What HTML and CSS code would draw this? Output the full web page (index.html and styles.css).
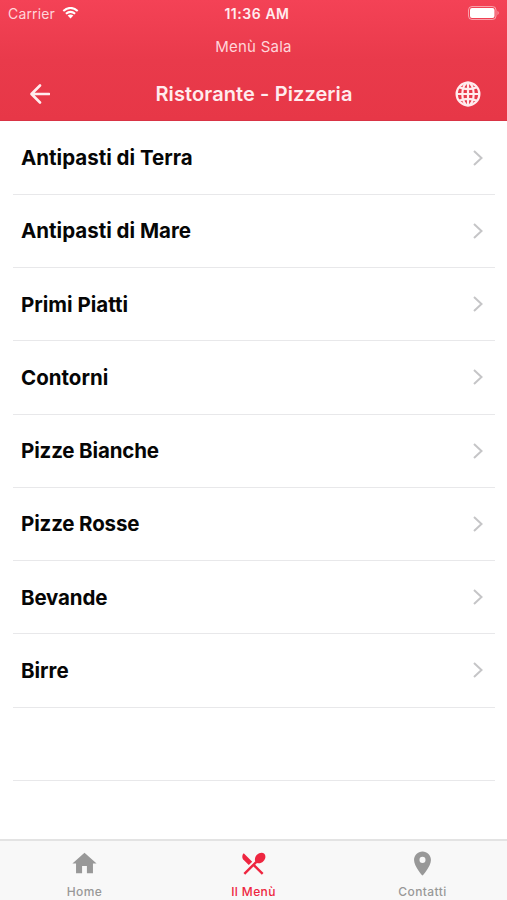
FILE: index.html
```html
<!DOCTYPE html>
<html lang="it">
<head>
<meta charset="utf-8">
<title>Menù Sala</title>
<link rel="stylesheet" href="styles.css">
</head>
<body>
<div class="app">
  <header class="header">
    <div class="status">
      <div class="carrier"><span>Carrier</span>
        <svg class="wifi" viewBox="0 0 18 13"><path d="M1.2 4.3Q9-2.3 16.8 4.3M4 7.4Q9 3.2 14 7.4" fill="none" stroke="currentColor" stroke-width="2.2"/><path d="M5.9 9.3Q9 7 12.1 9.3L9 12.4Z" fill="currentColor"/></svg>
      </div>
      <span class="time">11:36 AM</span>
      <svg class="battery" viewBox="0 0 32 14"><rect x=".5" y=".5" width="27.5" height="13" rx="3.5" fill="none" stroke="currentColor" opacity=".5"/><rect x="2" y="2" width="24.5" height="10" rx="2" fill="currentColor"/><path d="M29.5 4.8Q32 7 29.5 9.2Z" fill="currentColor" opacity=".5"/></svg>
    </div>
    <div class="subtitle">Menù Sala</div>
    <div class="navbar">
      <svg class="back" viewBox="0 0 20 20"><path d="M19 10H1.8M10 1.5L1.5 10L10 18.5" fill="none" stroke="currentColor" stroke-width="2.6" stroke-linecap="round" stroke-linejoin="round"/></svg>
      <h1 class="title">Ristorante - Pizzeria</h1>
      <svg class="globe" viewBox="0 0 26 26"><g fill="none" stroke="currentColor" stroke-width="2.2"><circle cx="13" cy="13" r="11.4"/><ellipse cx="13" cy="13" rx="5.7" ry="11.4"/><path d="M13 1.5V24.5M1.5 13H24.5M4 6.2Q13 10 22 6.2M4 19.8Q13 16 22 19.8"/></g></svg>
    </div>
  </header>
  <main class="list">
    <div class="row"><span class="name">Antipasti di Terra</span><svg class="chevron" viewBox="0 0 10 16"><path d="M1 1L8.5 8L1 15"/></svg></div>
    <div class="row"><span class="name">Antipasti di Mare</span><svg class="chevron" viewBox="0 0 10 16"><path d="M1 1L8.5 8L1 15"/></svg></div>
    <div class="row"><span class="name">Primi Piatti</span><svg class="chevron" viewBox="0 0 10 16"><path d="M1 1L8.5 8L1 15"/></svg></div>
    <div class="row"><span class="name">Contorni</span><svg class="chevron" viewBox="0 0 10 16"><path d="M1 1L8.5 8L1 15"/></svg></div>
    <div class="row"><span class="name tight">Pizze Bianche</span><svg class="chevron" viewBox="0 0 10 16"><path d="M1 1L8.5 8L1 15"/></svg></div>
    <div class="row"><span class="name tight">Pizze Rosse</span><svg class="chevron" viewBox="0 0 10 16"><path d="M1 1L8.5 8L1 15"/></svg></div>
    <div class="row"><span class="name tight">Bevande</span><svg class="chevron" viewBox="0 0 10 16"><path d="M1 1L8.5 8L1 15"/></svg></div>
    <div class="row"><span class="name">Birre</span><svg class="chevron" viewBox="0 0 10 16"><path d="M1 1L8.5 8L1 15"/></svg></div>
    <div class="row"></div>
  </main>
  <nav class="tabs">
    <div class="tab"><svg viewBox="0 0 24 24"><path d="M10 20v-6h4v6h5v-8h3L12 3 2 12h3v8z"/></svg><span>Home</span></div>
    <div class="tab active"><svg viewBox="0 0 24 24"><path d="M8.1 13.34l2.83-2.83L3.91 3.5c-1.56 1.56-1.56 4.09 0 5.66l4.19 4.18zm6.78-1.81c1.53.71 3.68.21 5.27-1.38 1.91-1.91 2.28-4.65.81-6.12-1.46-1.46-4.2-1.1-6.12.81-1.59 1.59-2.09 3.74-1.38 5.27L3.7 19.87l1.41 1.41L12 14.41l6.88 6.88 1.41-1.41L13.41 13l1.47-1.47z"/></svg><span>Il Menù</span></div>
    <div class="tab"><svg viewBox="0 0 24 24"><path d="M12 2C8.13 2 5 5.13 5 9c0 5.25 7 13 7 13s7-7.75 7-13c0-3.87-3.13-7-7-7zm0 9.5a2.5 2.5 0 1 1 0-5 2.5 2.5 0 0 1 0 5z"/></svg><span>Contatti</span></div>
  </nav>
</div>
</body>
</html>
```
FILE: styles.css
```css
* { box-sizing: border-box; }
body { margin: 0; font-family: Inter, "Liberation Sans", sans-serif; background: #fff; }
svg { display: block; flex: none; }
.app { height: 900px; display: flex; flex-direction: column; overflow: hidden; }
.header { height: 121px; flex: none; color: #ffecee; background: linear-gradient(#f44256 0, #e93a4b 60px, #e73747); border-bottom: 1px solid #d93445; }
.status { height: 27px; display: grid; grid-template-columns: 1fr auto 1fr; align-items: center; padding: 0 7px 0 8px; }
.carrier { display: flex; align-items: center; gap: 7px; font-size: 14px; letter-spacing: .15px; color: #ffd5da; }
.wifi { width: 17px; height: 12px; margin-top: -1px; color: #fff; }
.time { font-size: 14px; font-weight: 600; letter-spacing: .55px; margin-left: 6px; }
.battery { width: 32px; height: 14px; justify-self: end; margin-top: -1px; color: #fff; }
.subtitle { height: 39px; line-height: 39px; text-align: center; font-size: 15px; letter-spacing: .25px; color: #ffd5da; }
.navbar { height: 55px; display: grid; grid-template-columns: 20px 1fr 26px; align-items: center; padding: 0 26px 0 30px; }
.back { width: 20px; height: 20px; }
.globe { width: 26px; height: 26px; }
.title { margin: 0; padding-left: 3px; font-size: 20px; font-weight: 600; text-align: center; letter-spacing: .1px; }
.list { flex: 1; padding: .5px 12px 0 13px; }
.row { height: 73.28px; display: flex; align-items: center; justify-content: space-between; padding: 0 12px 0 8px; border-bottom: 1px solid #e8e8ea; }
.name { padding-top: 1px; font-size: 20.5px; line-height: 26px; font-weight: 650; letter-spacing: 0; color: #060606; }
.tight { letter-spacing: -.15px; }
.chevron { width: 10px; height: 16px; fill: none; stroke: #c5c5c7; stroke-width: 2; }
.tabs { height: 61px; flex: none; display: grid; grid-template-columns: repeat(3, 1fr); background: #f8f8f8; border-top: 2px solid #e3e3e3; }
.tab { display: flex; flex-direction: column; align-items: center; gap: 6px; padding-top: 8px; color: #989898; font-size: 12px; line-height: 16px; font-weight: 500; letter-spacing: .4px; }
.tab svg { width: 29px; height: 29px; fill: currentColor; }
.active { color: #ee2640; }
```
